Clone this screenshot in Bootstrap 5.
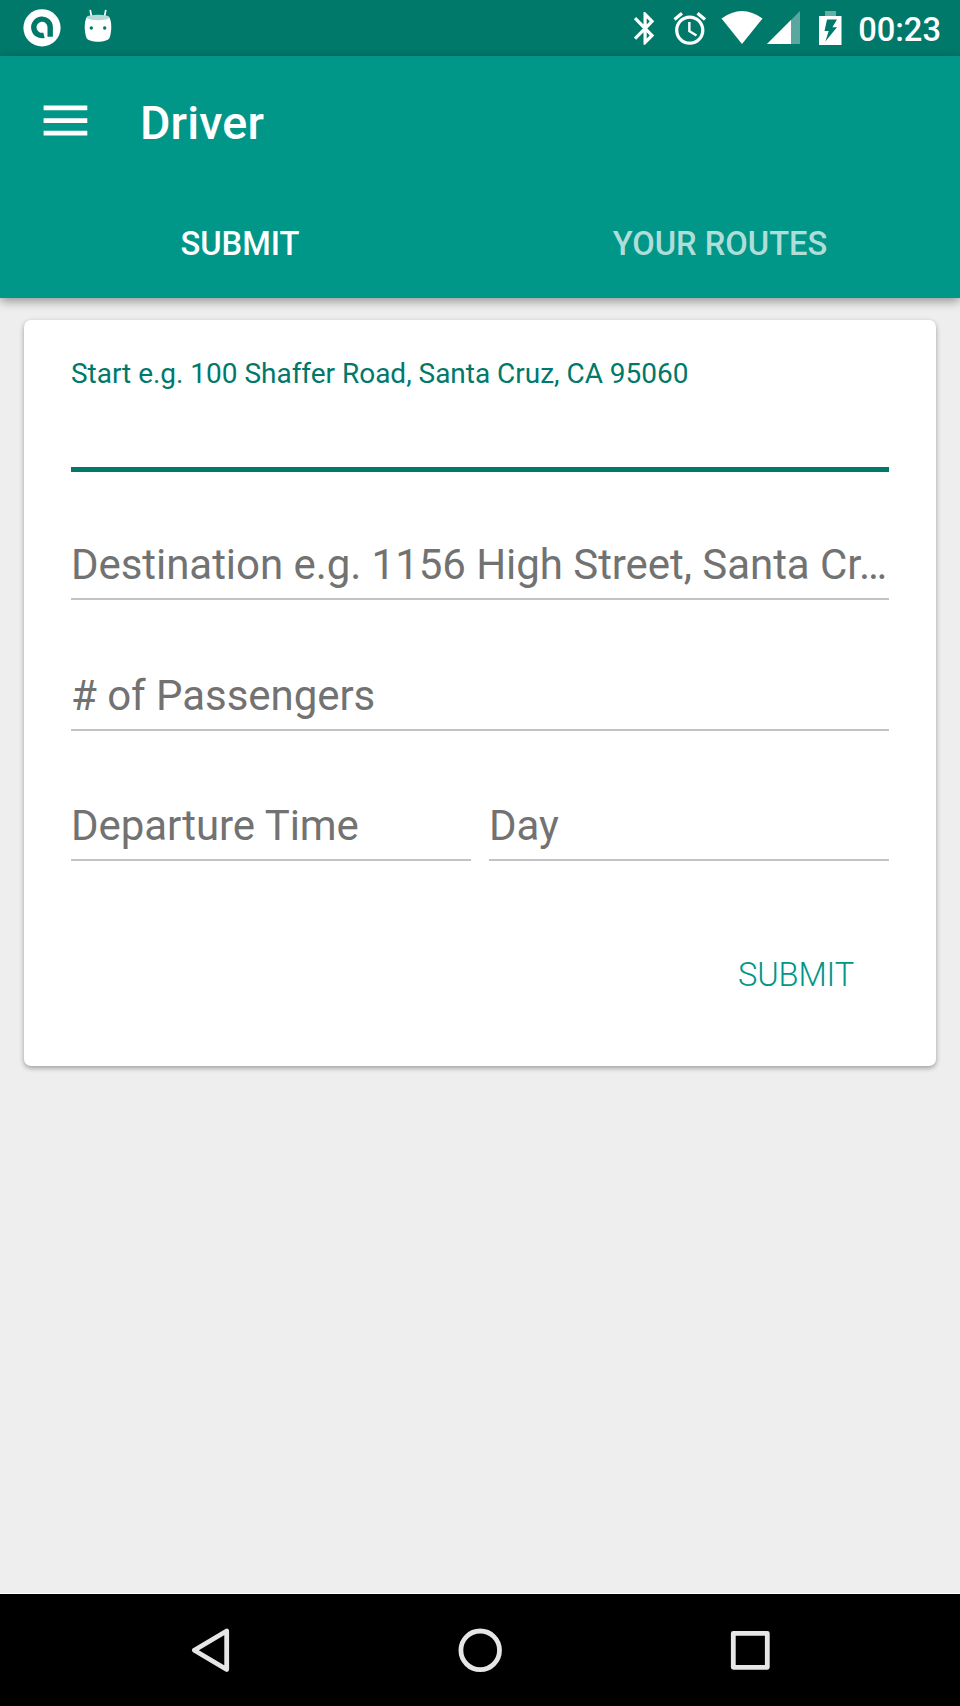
<!DOCTYPE html>
<html lang="en">
<head>
<meta charset="utf-8">
<meta name="viewport" content="width=device-width, initial-scale=1">
<title>Driver</title>
<link href="https://cdn.jsdelivr.net/npm/bootstrap@5.3.0/dist/css/bootstrap.min.css" rel="stylesheet">
<style>
  body { font-family: Roboto, sans-serif; background: #eee; height: 1706px; overflow: hidden; }
  svg { display: block; flex: none; }
  .status-bar { height: 56px; background: #00796b; color: #fff; padding: 0 19px 0 20px; }
  .clock { font-size: 32.67px; line-height: 38px; font-weight: 500; margin: 4px 0 0 16px; }
  .app-bar { height: 242px; background: #009688; box-shadow: 0 3px 10px rgba(0,0,0,.4); z-index: 1; }
  .app-title { height: 132px; padding-left: 43px; }
  .app-title svg { margin-bottom: 3px; }
  .app-title h1 { font-size: 46.67px; line-height: 56px; font-weight: 500; letter-spacing: .15px; margin: 2px 0 0 52px; }
  .route-tabs { height: 110px; }
  .route-tabs .nav-link { color: rgba(255,255,255,.7); font-size: 32.67px; line-height: 38px; font-weight: 500; padding: 37px 0 0; }
  .route-tabs .nav-link, .route-tabs .nav-link.active { background: none; border: 0; }
  .route-tabs .nav-link.active, .route-tabs .nav-link:hover { color: #fff; }
  .route-card { margin: 22px 24px 0; height: 746px; border: 0; border-radius: 7px; padding: 0 47px; box-shadow: 0 2px 5px rgba(0,0,0,.35); }
  .field { border-bottom: 2px solid #c3c3c3; color: #727272; font-size: 42px; letter-spacing: -.05px; padding-bottom: 12px; }
  .field span { line-height: 50px; margin-bottom: -4px; white-space: nowrap; }
  .field-start { height: 152px; border-bottom: 5px solid #00796b; color: #00796b; font-size: 28px; line-height: 28px; letter-spacing: -.02px; padding-top: 40px; }
  .h-dest { height: 128px; } .h-pass { height: 131px; } .h-time { height: 130px; }
  .times { gap: 18px; }
  .submit-btn { color: #009688; font-size: 32.67px; font-weight: 300; line-height: 38px; letter-spacing: -.15px; padding: 0; margin: 95px 35px 0 0; border: 0; }
  .nav-bar { height: 112px; background: #000; }
  .content-area { border-bottom: 1px solid #fff; }
</style>
</head>
<body class="d-flex flex-column">
  <div class="status-bar d-flex align-items-center justify-content-between">
    <svg width="96" height="56" viewBox="20 0 96 56" fill="#fff">
      <circle cx="42" cy="27.8" r="18.6"/>
      <path d="M44 35.3a8.2 8.2 0 1 1 6.2-8V36.7" fill="none" stroke="#00796b" stroke-width="5.4"/>
      <path d="M90.3 10.5l1.2 6M105.7 10.5l-1.2 6" stroke="#fff" stroke-width="1.7" stroke-linecap="round"/>
      <path d="M86.5 17.5C84.3 22 84 31 86.5 38c3 5 20 5 23 0 2.500-7 2.200-16 0-20.500z"/>
      <ellipse cx="98" cy="17.500" rx="11.500" ry="2.700" fill="#b5d9d4"/>
      <circle cx="91.300" cy="28" r="1.700" fill="#00796b"/><circle cx="104.700" cy="28" r="1.700" fill="#00796b"/>
    </svg>
    <div class="d-flex align-items-center">
      <svg width="212" height="56" viewBox="630 0 212 56" fill="#fff">
        <path transform="translate(625.900 8.700) scale(1.600 1.640)" d="M17.710 7.710L12 2h-1v7.590L6.410 5 5 6.410 10.590 12 5 17.590 6.410 19 11 14.410V22h1l5.710-5.710-4.300-4.290 4.300-4.290zM13 5.830l1.880 1.880L13 9.590V5.830zm1.880 10.460L13 18.170v-3.760l1.880 1.880z"/>
        <path transform="translate(670.200 9) scale(1.630)" d="M22 5.720l-4.600-3.860-1.290 1.530 4.600 3.860L22 5.720zM7.880 3.390L6.600 1.860 2 5.710l1.290 1.530 4.590-3.850zM12.500 8H11v6l4.750 2.850.75-1.230-4-2.370V8zM12 4c-4.970 0-9 4.030-9 9s4.020 9 9 9c4.970 0 9-4.030 9-9s-4.030-9-9-9zm0 16c-3.870 0-7-3.130-7-7s3.130-7 7-7 7 3.130 7 7-3.130 7-7 7z"/>
        <path d="M721.500 18.500q20.500-15 41 0L742 44z"/>
        <path d="M800 11v33h-33z" opacity=".35"/><path d="M791 20v24h-24z"/>
        <path d="M825 11h11v5h-11z" opacity=".4"/>
        <path fill-rule="evenodd" d="M819 16h22.500v29H819zM827 19.500L824.500 31h4.200l-3.400 10.500L837 27.300h-4.600l4.600-7.800z"/>
      </svg>
      <span class="clock">00:23</span>
    </div>
  </div>

  <header class="app-bar position-relative text-white">
    <div class="app-title d-flex align-items-center">
      <svg width="45" height="32" viewBox="0 0 45 32" fill="#fff"><path d="M.600.500H44.300V5.300H.600zM.600 13.200H44.300V18H.600zM.600 25.800H44.300V30.600H.600z"/></svg>
      <h1>Driver</h1>
    </div>
    <ul class="nav nav-pills nav-justified route-tabs">
      <li class="nav-item"><a class="nav-link active" href="#">SUBMIT</a></li>
      <li class="nav-item"><a class="nav-link" href="#">YOUR ROUTES</a></li>
    </ul>
  </header>

  <main class="content-area flex-grow-1">
    <form class="card route-card bg-white">
      <div class="field-start"><label>Start e.g. 100 Shaffer Road, Santa Cruz, CA 95060</label></div>
      <div class="field h-dest d-flex align-items-end"><span>Destination e.g. 1156 High Street, Santa Cr…</span></div>
      <div class="field h-pass d-flex align-items-end"><span># of Passengers</span></div>
      <div class="d-flex times">
        <div class="field h-time d-flex align-items-end flex-fill w-50"><span>Departure Time</span></div>
        <div class="field h-time d-flex align-items-end flex-fill w-50"><span>Day</span></div>
      </div>
      <button type="button" class="btn submit-btn align-self-end">SUBMIT</button>
    </form>
  </main>

  <nav class="nav-bar d-flex justify-content-center">
    <svg width="600" height="112" viewBox="180 1594 600 112" fill="none" stroke="#e6e6e6" stroke-width="4.800" stroke-linejoin="round">
      <path d="M226.700 1631v38.500L194.300 1650.300z"/>
      <circle cx="480.200" cy="1650.300" r="19.300"/>
      <rect x="733.300" y="1633.300" width="34" height="34"/>
    </svg>
  </nav>
<script src="https://cdn.jsdelivr.net/npm/bootstrap@5.3.0/dist/js/bootstrap.bundle.min.js"></script>
</body>
</html>
